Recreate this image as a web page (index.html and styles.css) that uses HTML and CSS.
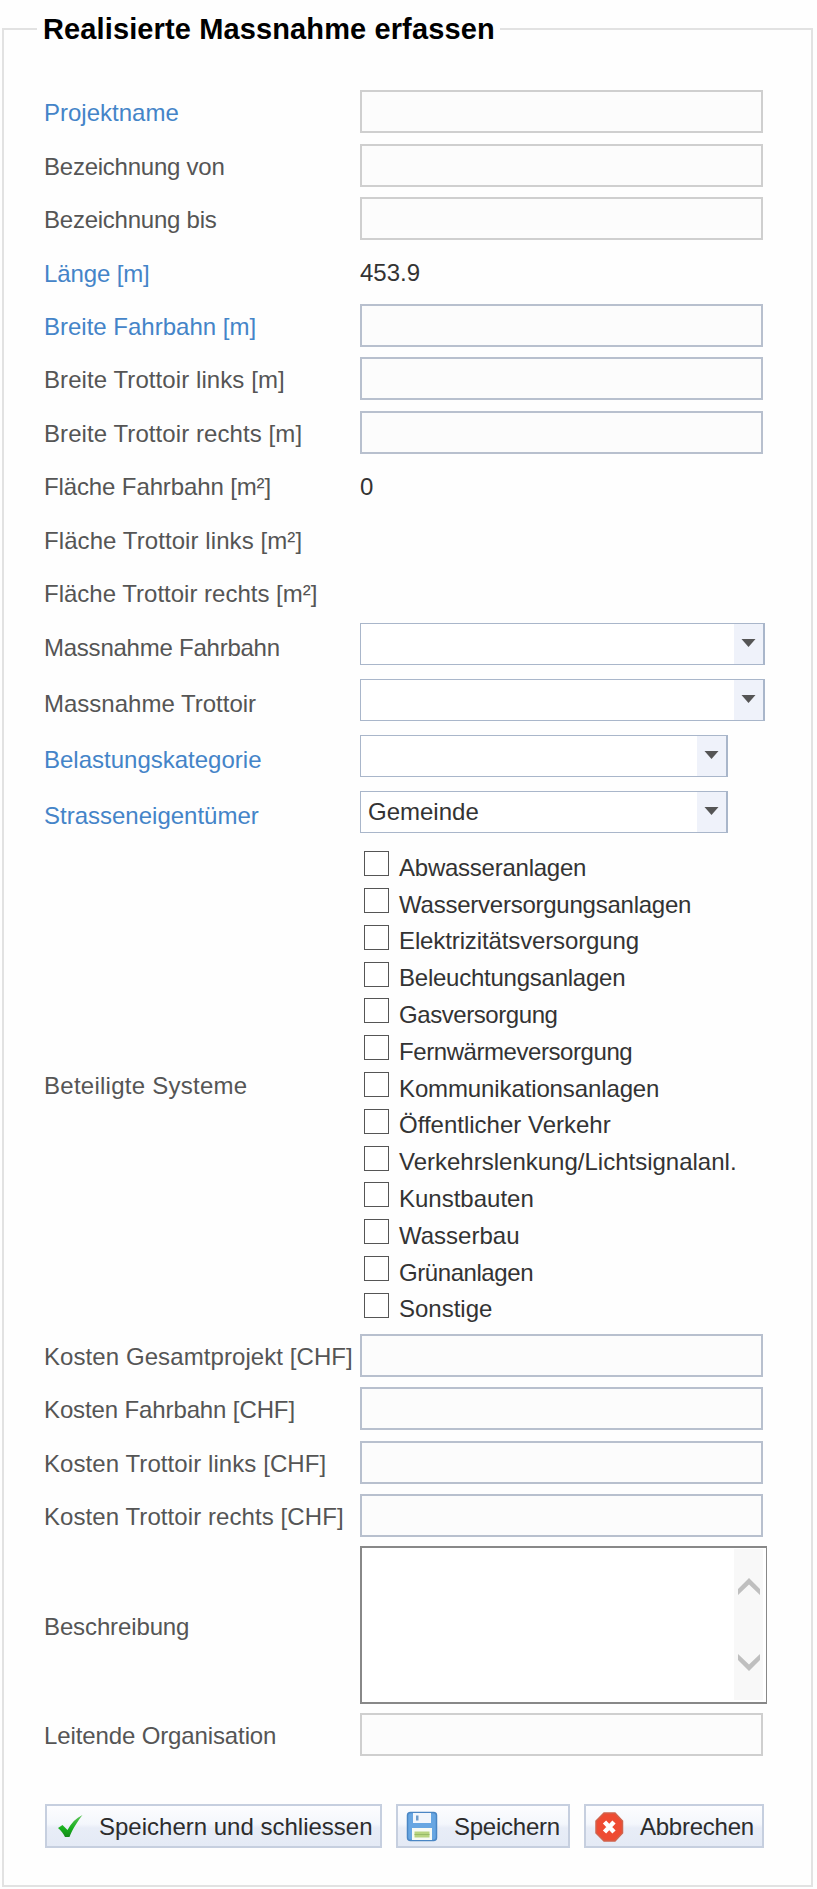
FILE: index.html
```html
<!DOCTYPE html>
<html lang="de">
<head>
<meta charset="utf-8">
<title>Realisierte Massnahme erfassen</title>
<link rel="stylesheet" href="styles.css">
</head>
<body>
<form>
<fieldset class="panel">
<legend>Realisierte Massnahme erfassen</legend>
<div class="rows">
<div class="row"><label class="req">Projektname</label><input class="field gray"></div>
<div class="row"><label class="tight2">Bezeichnung von</label><input class="field gray"></div>
<div class="row"><label class="tight2">Bezeichnung bis</label><input class="field gray"></div>
<div class="row"><label class="req tight1">Länge [m]</label><span class="value">453.9</span></div>
<div class="row"><label class="req">Breite Fahrbahn [m]</label><input class="field"></div>
<div class="row"><label class="wide1">Breite Trottoir links [m]</label><input class="field"></div>
<div class="row"><label class="wide1">Breite Trottoir rechts [m]</label><input class="field"></div>
<div class="row"><label class="tight1">Fläche Fahrbahn [m²]</label><span class="value">0</span></div>
<div class="row"><label class="wide1">Fläche Trottoir links [m²]</label></div>
<div class="row"><label>Fläche Trottoir rechts [m²]</label></div>
<div class="row pick"><label class="tight2">Massnahme Fahrbahn</label><div class="combo"><span></span><i><svg viewBox="0 0 14 8"><path d="M0 0h14L7 8z"/></svg></i></div></div>
<div class="row pick"><label>Massnahme Trottoir</label><div class="combo"><span></span><i><svg viewBox="0 0 14 8"><path d="M0 0h14L7 8z"/></svg></i></div></div>
<div class="row pick"><label class="req">Belastungskategorie</label><div class="combo short"><span></span><i><svg viewBox="0 0 14 8"><path d="M0 0h14L7 8z"/></svg></i></div></div>
<div class="row pick"><label class="req">Strasseneigentümer</label><div class="combo short"><span>Gemeinde</span><i><svg viewBox="0 0 14 8"><path d="M0 0h14L7 8z"/></svg></i></div></div>
<div class="row systems"><label class="wide2">Beteiligte Systeme</label>
<div class="checks">
<label class="tight2"><input type="checkbox"><span>Abwasseranlagen</span></label>
<label class="tight2"><input type="checkbox"><span>Wasserversorgungsanlagen</span></label>
<label class="tight1"><input type="checkbox"><span>Elektrizitätsversorgung</span></label>
<label class="tight2"><input type="checkbox"><span>Beleuchtungsanlagen</span></label>
<label class="tight3"><input type="checkbox"><span>Gasversorgung</span></label>
<label class="tight3"><input type="checkbox"><span>Fernwärmeversorgung</span></label>
<label class="tight1"><input type="checkbox"><span>Kommunikationsanlagen</span></label>
<label><input type="checkbox"><span>Öffentlicher Verkehr</span></label>
<label><input type="checkbox"><span>Verkehrslenkung/Lichtsignalanl.</span></label>
<label><input type="checkbox"><span>Kunstbauten</span></label>
<label><input type="checkbox"><span>Wasserbau</span></label>
<label class="tight3"><input type="checkbox"><span>Grünanlagen</span></label>
<label><input type="checkbox"><span>Sonstige</span></label>
</div></div>
<div class="row"><label class="wide1">Kosten Gesamtprojekt [CHF]</label><input class="field"></div>
<div class="row"><label class="tight1">Kosten Fahrbahn [CHF]</label><input class="field"></div>
<div class="row"><label class="wide1">Kosten Trottoir links [CHF]</label><input class="field"></div>
<div class="row"><label class="wide1">Kosten Trottoir rechts [CHF]</label><input class="field"></div>
<div class="row memo"><label class="tight1">Beschreibung</label>
<div class="area"><div class="scroll">
<svg viewBox="0 0 22 17"><path d="M0 11L11 0l11 11v6L11 6.5 0 17z"/></svg>
<svg viewBox="0 0 22 17"><path d="M0 6L11 17 22 6V0L11 10.500 0 0z"/></svg>
</div></div></div>
<div class="row"><label class="tight1">Leitende Organisation</label><input class="field gray"></div>
</div>
<div class="actions">
<button type="button" class="save-close"><svg viewBox="0 0 32 32"><defs><linearGradient id="g" x1="0" y1="0" x2="0" y2="1"><stop offset="0" stop-color="#5fc45c"/><stop offset=".6" stop-color="#16b01c"/><stop offset="1" stop-color="#168a1a"/></linearGradient></defs><path d="M3 17l4.500-3 5 5C16 12 21 7 27.500 4 23 10 17.500 18 14.500 26h-4.500C8.500 23 6.500 20 3 17z" fill="url(#g)"/></svg><span>Speichern und schliessen</span></button>
<button type="button" class="save"><svg viewBox="0 0 32 32"><rect x="1.500" y="1.500" width="29" height="28" rx="3" fill="#67a6e2" stroke="#4a86c4" stroke-width="1.500"/><path d="M7 2h18v10H7z" fill="#f1f6fc"/><path d="M10 4.500h2.500v5H10z" fill="#6c9bca"/><path d="M6 17h20v12H6z" fill="#f7faf4"/><path d="M8.500 20.500h15v6h-15z" fill="#b7d480"/><path d="M8.500 23.500h15" stroke="#98bb68"/></svg><span>Speichern</span></button>
<button type="button" class="cancel"><svg viewBox="0 0 32 32"><path d="M10 2h11l7.500 8v12L21 30H10l-8-8V10z" fill="#ee4b32" stroke="#d0634c" stroke-width="1.500"/><path d="M10.500 11l9.500 10m0-10l-9.500 10" stroke="#fff" stroke-width="4.500"/></svg><span>Abbrechen</span></button>
</div>
</fieldset>
</form>
</body>
</html>
```
FILE: styles.css
```css
* { box-sizing: border-box; }
body {
  margin: 0;
  padding: 11px 0 0 2px;
  background: #fefefe;
  font: 24px/28px "Liberation Sans", Arial, sans-serif;
  color: #333;
}
.panel {
  width: 811px;
  height: 1876px;
  margin: 0;
  padding: 0 0 0 40px;
  border: 2px solid #e2e2e2;
}
legend {
  margin-left: -7px;
  padding: 2px 5px 0 6px;
  font-size: 29px;
  line-height: 33px;
  font-weight: bold;
  letter-spacing: 0.12px;
  color: #000;
  white-space: nowrap;
}
.rows { padding-top: 39px; }
.row {
  display: grid;
  grid-template-columns: 316px 1fr;
  align-items: center;
  height: 53.45px;
}
.row > label { color: #555; padding-top: 3px; white-space: nowrap; }
.row > .req { color: #4484c8; }
.tight1 { letter-spacing: -0.12px; }
.tight2 { letter-spacing: -0.24px; }
.tight3 { letter-spacing: -0.43px; }
.wide1 { letter-spacing: 0.08px; }
.wide2 { letter-spacing: 0.26px; }
.value { padding-top: 2px; }
.field {
  width: 403px;
  height: 43px;
  margin: 0;
  padding: 0 8px;
  border: 2px solid #b8c0ce;
  border-radius: 0;
  background: #fcfcfc;
  font: inherit;
}
.gray { border-color: #cfcfcf; }
.row.pick { height: 56px; }
.row.pick > label { padding-top: 1px; }
.combo {
  display: flex;
  width: 405px;
  height: 42px;
  margin-bottom: 6px;
  border: 1.500px solid #a9b6ca;
  border-right-width: 2px;
  background: #fff;
}
.short { width: 368px; }
.combo span { flex: 1; padding: 6px 7px; }
.combo i {
  width: 29px;
  padding-left: 7px;
  padding-top: 15px;
  background: #eff2fa;
  line-height: 0;
}
.combo svg { width: 15px; height: 8px; fill: #555; }
.row.systems { height: 485.2px; }
.row.systems > label { padding-top: 0; }
.checks { align-self: start; padding-top: 2px; }
.checks label { display: flex; align-items: center; height: 36.8px; }
.checks input {
  appearance: none;
  width: 25px;
  height: 25px;
  margin: 0 10px 0 4px;
  border: 1.500px solid #555;
  background: #fff;
}
.checks span { padding-top: 8px; }
.row.memo { height: 165.5px; }
.area {
  display: flex;
  justify-content: flex-end;
  width: 407px;
  height: 158px;
  padding: 1px 3px 2px 0;
  border: 2px solid #888;
  border-right-width: 1px;
  background: #fff;
}
.scroll {
  display: flex;
  flex-direction: column;
  justify-content: space-between;
  align-items: center;
  width: 29px;
  padding: 29px 0;
  background: #f8f8f8;
}
.scroll svg { width: 22px; height: 17px; fill: #bfbfbf; }
.actions { display: flex; padding: 43px 0 0 1px; }
button {
  display: flex;
  align-items: center;
  height: 44px;
  margin: 0 14px 0 0;
  padding: 2px 0 0 8px;
  border: 2px solid #c6cfdf;
  border-radius: 0;
  background: linear-gradient(#fdfdff 0, #f4f7fc 45%, #e8edf7 55%, #e4eaf5);
  font: inherit;
  color: #2c2c2c;
  white-space: nowrap;
}
button svg { width: 32px; height: 32px; flex: none; }
.save-close { width: 337px; }
.save { width: 174px; }
.cancel { width: 180px; }
.save-close span { margin-left: 12px; }
.save span { margin-left: 16px; letter-spacing: -0.25px; }
.cancel span { margin-left: 14px; letter-spacing: -0.25px; }
```
